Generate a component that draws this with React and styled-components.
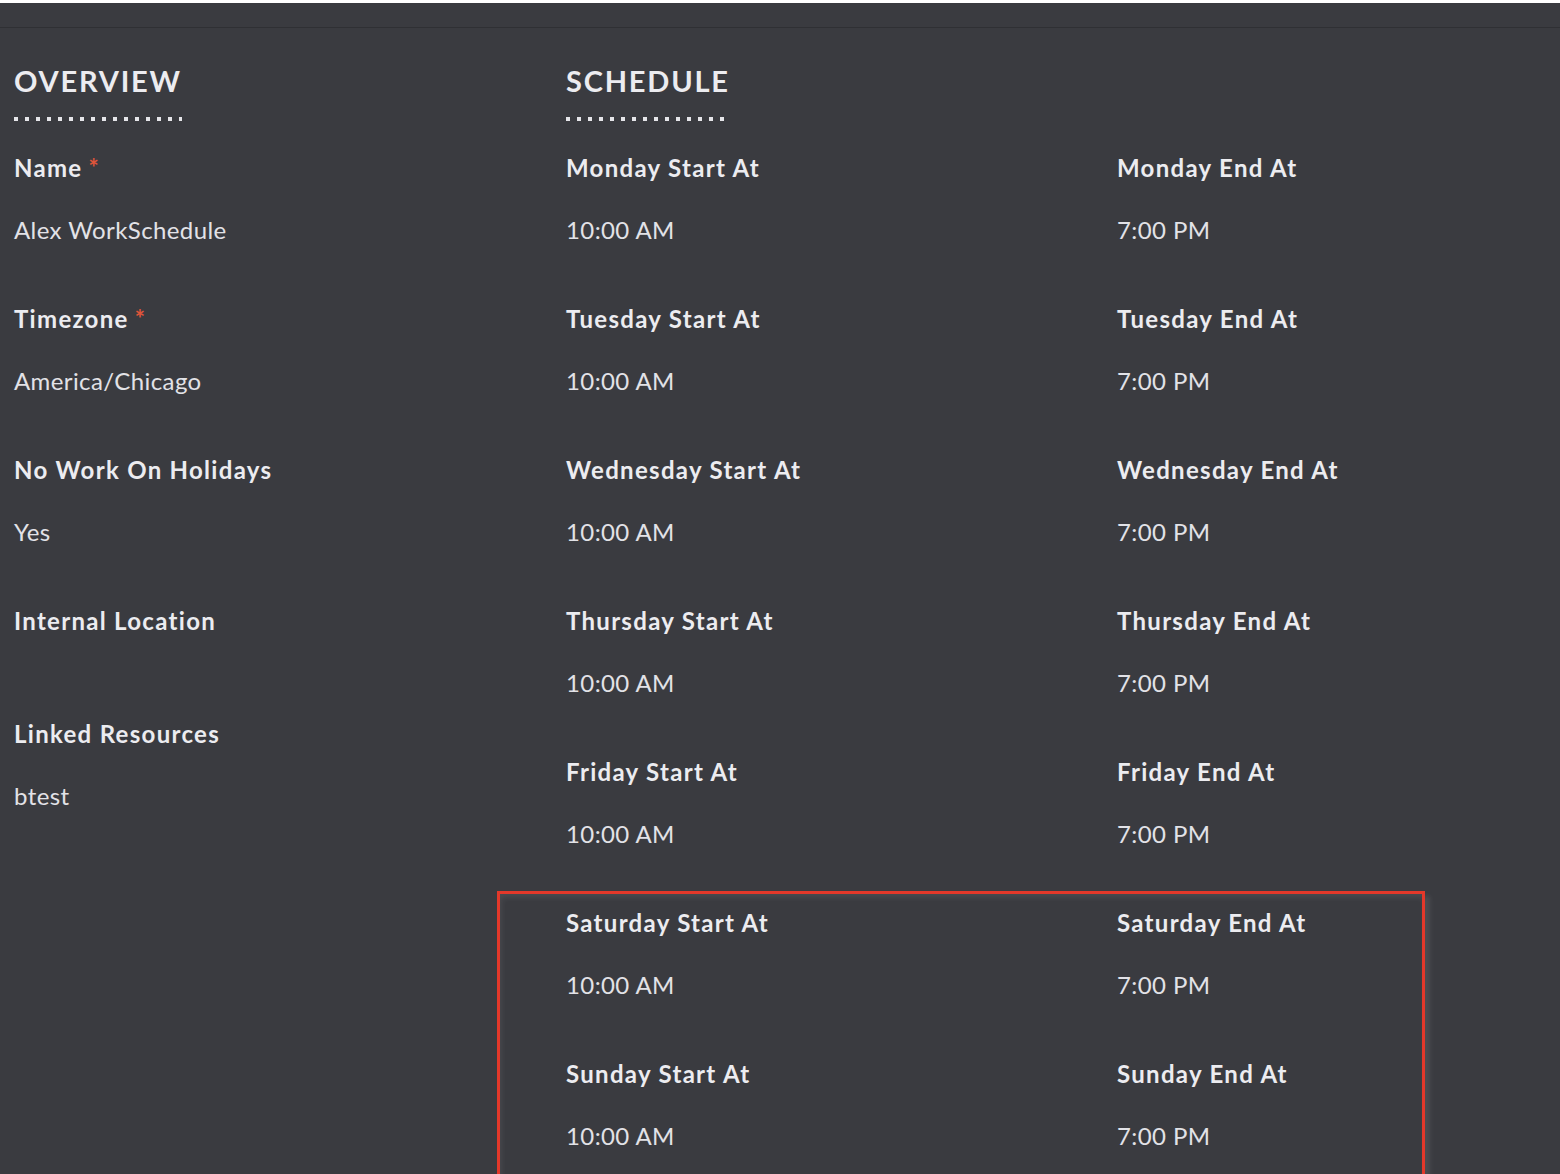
import React from "react";
import styled, { createGlobalStyle } from "styled-components";

const Global = createGlobalStyle`
  html, body { margin: 0; padding: 0; background: #3a3b40; }
  body { font-family: Lato, "Open Sans", sans-serif; color: #e9e9ee; }
  * { box-sizing: border-box; }
`;

const Page = styled.div`
  width: 1560px;
  height: 1174px;
  overflow: hidden;
  background: #3a3b40;
  border-top: 3px solid #ffffff;
`;

const TopBar = styled.div`
  height: 25px;
  border-bottom: 1px solid #2f3034;
  background: #3a3b40;
`;

const Content = styled.div`
  display: grid;
  grid-template-columns: 552px 1fr;
  padding: 35px 0 0 14px;
`;

const Column = styled.div`
  display: flex;
  flex-direction: column;
`;

const Heading = styled.h2`
  display: inline-block;
  align-self: flex-start;
  margin: 0 0 30px;
  font-size: 29px;
  line-height: 36px;
  font-weight: 700;
  letter-spacing: 1.8px;
  color: #ececf0;
  padding-bottom: 22px;
  position: relative;
  &::after {
    content: "";
    position: absolute;
    left: 0;
    right: 0;
    bottom: 0;
    height: 4px;
    background-image: repeating-linear-gradient(
      to right,
      #e6e6ea 0 4px,
      transparent 4px 11px
    );
  }
`;

const ScheduleGrid = styled.div`
  display: grid;
  grid-template-columns: 551px 1fr;
  align-content: start;
`;

const Field = styled.div`
  margin-bottom: 53px;
`;

const Label = styled.div`
  font-size: 24px;
  line-height: 34px;
  font-weight: 700;
  letter-spacing: 1.3px;
  color: #ececf0;
  margin-bottom: 26px;
`;

const Required = styled.span`
  color: #e0553a;
  font-size: 24px;
  line-height: 1;
  margin-left: 6px;
`;

const Value = styled.div`
  font-size: 24px;
  line-height: 38px;
  font-weight: 400;
  letter-spacing: 0.4px;
  color: #e2e2e7;
`;

const Highlight = styled.div`
  grid-column: 1 / -1;
  display: grid;
  grid-template-columns: 551px 1fr;
  align-content: start;
  margin: -15px 0 0 -69px;
  padding: 12px 0 0 66px;
  width: 928px;
  border: 3px solid #e3382a;
  border-bottom: none;
  box-shadow: inset 2px 4px 6px -1px rgba(255, 255, 255, 0.09),
    6px 4px 5px -1px rgba(255, 255, 255, 0.09);
`;

function Item({ label, value, required }) {
  return (
    <Field>
      <Label>
        {label}
        {required && <Required>*</Required>}
      </Label>
      <Value>{value}</Value>
    </Field>
  );
}

const overview = [
  { label: "Name", value: "Alex WorkSchedule", required: true },
  { label: "Timezone", value: "America/Chicago", required: true },
  { label: "No Work On Holidays", value: "Yes" },
  { label: "Internal Location", value: "" },
  { label: "Linked Resources", value: "btest" },
];

const days = ["Monday", "Tuesday", "Wednesday", "Thursday", "Friday"];
const weekend = ["Saturday", "Sunday"];

export default function App() {
  return (
    <>
      <Global />
      <Page>
        <TopBar />
        <Content>
          <Column>
            <Heading>OVERVIEW</Heading>
            {overview.map((f) => (
              <Item key={f.label} {...f} />
            ))}
          </Column>
          <Column>
            <Heading>SCHEDULE</Heading>
            <ScheduleGrid>
              {days.map((d) => (
                <React.Fragment key={d}>
                  <Item label={`${d} Start At`} value="10:00 AM" />
                  <Item label={`${d} End At`} value="7:00 PM" />
                </React.Fragment>
              ))}
              <Highlight>
                {weekend.map((d) => (
                  <React.Fragment key={d}>
                    <Item label={`${d} Start At`} value="10:00 AM" />
                    <Item label={`${d} End At`} value="7:00 PM" />
                  </React.Fragment>
                ))}
              </Highlight>
            </ScheduleGrid>
          </Column>
        </Content>
      </Page>
    </>
  );
}
